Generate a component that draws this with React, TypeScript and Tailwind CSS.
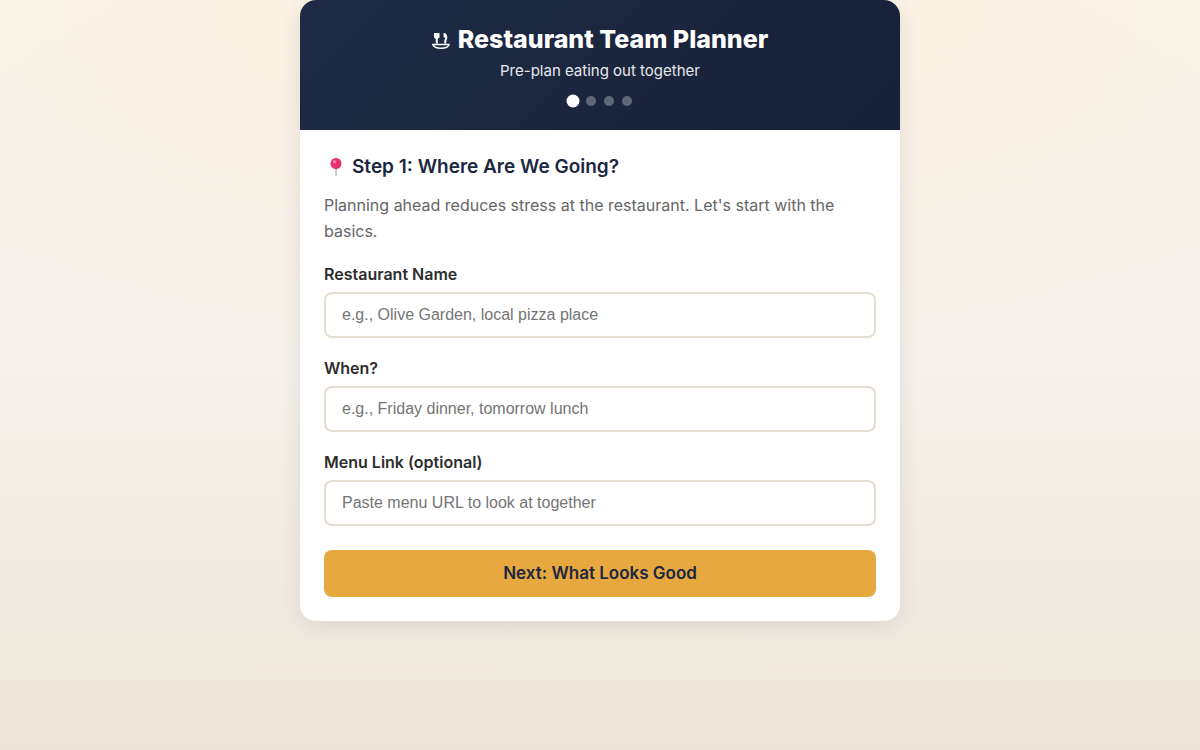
interface Field {
  id: string;
  label: string;
  placeholder: string;
  type: string;
}

const fields: Field[] = [
  {
    id: "restaurant",
    label: "Restaurant Name",
    placeholder: "e.g., Olive Garden, local pizza place",
    type: "text",
  },
  {
    id: "when",
    label: "When?",
    placeholder: "e.g., Friday dinner, tomorrow lunch",
    type: "text",
  },
  {
    id: "menu",
    label: "Menu Link (optional)",
    placeholder: "Paste menu URL to look at together",
    type: "url",
  },
];

function DishIcon() {
  return (
    <svg viewBox="0 0 18 22" className="h-[22px] w-[18px]" fill="none" aria-hidden="true">
      <path d="M2 5h5.500v4.500L5.800 11v4.500h-2V11L2 9.500z" fill="currentColor" />
      <path
        d="M11.500 5c2.500 0 3.800 2 3.800 4.500 0 2-1 2.500-1.200 6H12.300V12l1-1.500-1.800-2z"
        fill="currentColor"
      />
      <path
        d="M.8 16.500h16.400c-1 2.800-3.500 3.700-8.200 3.700s-7.200-.9-8.200-3.700z"
        stroke="currentColor"
        strokeWidth="1.500"
        strokeLinejoin="round"
      />
    </svg>
  );
}

function PinIcon() {
  return (
    <svg viewBox="0 0 20 20" className="h-5 w-5" aria-hidden="true">
      <path d="M11.300 11h1.500l-.3 8h-.9z" fill="#9aa5ad" />
      <circle cx="12" cy="6.500" r="5.500" fill="#e5306b" />
      <circle cx="10.500" cy="4.800" r="1.800" fill="#f580a6" />
    </svg>
  );
}

function StepDots({ step, total }: { step: number; total: number }) {
  return (
    <div className="mt-3 flex items-center justify-center gap-2">
      {Array.from({ length: total }, (_, i) => (
        <span
          key={i}
          className={
            i === step
              ? "h-[10px] w-[10px] scale-130 rounded-full bg-white"
              : "h-[10px] w-[10px] rounded-full bg-white/30"
          }
        />
      ))}
    </div>
  );
}

export default function App() {
  return (
    <div className="min-h-screen bg-[radial-gradient(ellipse_75%_50%_at_top,rgba(232,168,64,0.1),transparent),linear-gradient(180deg,#fcf7f0_0%,#f5f0ea_50%,#eee6da_100%)] font-['Inter',sans-serif] text-[#2d2d2d]">
      <main className="mx-auto max-w-[600px] overflow-hidden rounded-2xl bg-white shadow-[0_4px_20px_rgba(27,38,64,0.1)]">
        <header className="bg-linear-135 from-[#1f2b45] to-[#172038] p-6 text-center text-white">
          <h1 className="flex items-center justify-center gap-2 text-[25px] leading-[30px] font-extrabold">
            <DishIcon />
            Restaurant Team Planner
          </h1>
          <p className="mt-1 text-[15px] leading-[26px] text-white/90">Pre-plan eating out together</p>
          <StepDots step={0} total={4} />
        </header>

        <form className="p-6" onSubmit={(e) => e.preventDefault()}>
          <h2 className="flex items-center gap-2 text-[19px] leading-[26px] font-semibold text-[#1c2741]">
            <PinIcon />
            Step 1: Where Are We Going?
          </h2>
          <p className="mt-3 text-base leading-[26px] text-[#666666]">
            Planning ahead reduces stress at the restaurant. Let's start with the basics.
          </p>

          <div className="mt-4 flex flex-col gap-4">
            {fields.map((field) => (
              <div key={field.id}>
                <label htmlFor={field.id} className="mb-1 block text-base leading-7 font-semibold">
                  {field.label}
                </label>
                <input
                  id={field.id}
                  type={field.type}
                  placeholder={field.placeholder}
                  className="block h-[46px] w-full rounded-lg border-2 border-[#e5ddd0] bg-white px-4 font-['Liberation_Sans',sans-serif] text-base placeholder:text-[#757575]"
                />
              </div>
            ))}
          </div>

          <button
            type="submit"
            className="mt-6 block w-full rounded-lg bg-[#e8a840] py-3 text-[17px] leading-[23px] font-semibold text-[#1c2741]"
          >
            Next: What Looks Good
          </button>
        </form>
      </main>
    </div>
  );
}
